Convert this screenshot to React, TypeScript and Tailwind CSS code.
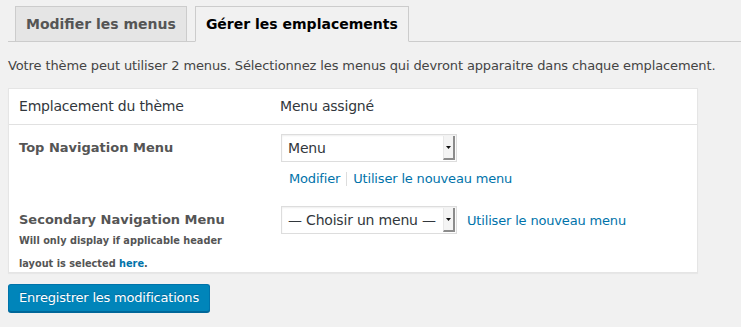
import React from "react";

function Arrow() {
  return (
    <div className="absolute right-[1px] top-[1px] bottom-[1px] w-[12px] bg-[#f4f4f4] border-r-2 border-b-2 border-[#8c8c8c] border-l border-l-[#e8e8e8] flex items-center justify-center">
      <svg width="5" height="3" viewBox="0 0 5 3">
        <path d="M0 0h5L2.5 3z" fill="#111" />
      </svg>
    </div>
  );
}

function Select({ label }: { label: string }) {
  return (
    <div className="relative w-[176px] h-[28px] border border-[#ddd] bg-white shadow-[inset_0_1px_2px_rgba(0,0,0,0.07)] flex items-center pl-[6px] text-[14px] tracking-[-0.2px] text-[#32373c]">
      <span>{label}</span>
      <Arrow />
    </div>
  );
}

export default function App() {
  return (
    <div
      className="w-[741px] h-[327px] bg-[#f1f1f1] overflow-hidden"
      style={{ fontFamily: '"DejaVu Sans", sans-serif' }}
    >
      <div className="ml-2 pt-[6px] pl-[7px] flex gap-[8px] border-b border-[#ccc]">
        <div className="-mb-px border border-[#ccc] bg-[#e5e5e5] px-[10px] py-[5px] leading-[24px] text-[14px] font-bold text-[#555]">
          Modifier les menus
        </div>
        <div className="-mb-px border border-[#ccc] border-b-[#f1f1f1] bg-[#f1f1f1] px-[10px] py-[5px] leading-[24px] text-[14px] font-bold text-black">
          Gérer les emplacements
        </div>
      </div>

      <p className="mt-[14px] ml-2 text-[13px] leading-[19px] tracking-[-0.12px] text-[#444]">
        Votre thème peut utiliser 2 menus. Sélectionnez les menus qui devront apparaitre dans chaque emplacement.
      </p>

      <div className="mt-[13px] ml-2 w-[690px] border border-[#e5e5e5] bg-white shadow-[0_1px_1px_rgba(0,0,0,0.04)]">
        <div className="flex border-b border-[#e1e1e1] py-2 text-[14px] leading-[19px] tracking-[-0.2px] text-[#32373c]">
          <div className="w-[272px] pl-[10px]">Emplacement du thème</div>
          <div className="-ml-px">Menu assigné</div>
        </div>

        <div className="flex pt-[9px] pb-[9px]">
          <div className="w-[272px] pl-[10px] pt-[4px] text-[13px] leading-[19px] font-bold text-[#555]">
            Top Navigation Menu
          </div>
          <div>
            <Select label="Menu" />
            <div className="mt-[7px] ml-[8px] flex items-center text-[13px] leading-[19px] tracking-[-0.17px] text-[#0073aa]">
              <span>Modifier</span>
              <span className="mx-[6px] w-px h-[14px] bg-[#ddd]" />
              <span>Utiliser le nouveau menu</span>
            </div>
          </div>
        </div>

        <div className="flex h-[75px] pt-[9px]">
          <div className="w-[272px] pl-[10px] pt-[4px]">
            <div className="text-[13px] leading-[19px] font-bold text-[#555]">Secondary Navigation Menu</div>
            <div className="w-[215px] text-[9.75px] leading-[23px] font-bold text-[#555]">
              <div>Will only display if applicable header</div>
              <div>
                layout is selected <span className="text-[#0073aa]">here</span>.
              </div>
            </div>
          </div>
          <div className="flex items-start">
            <Select label="— Choisir un menu —" />
            <span className="ml-[10px] mt-[1px] text-[13px] leading-[28px] tracking-[-0.17px] text-[#0073aa]">
              Utiliser le nouveau menu
            </span>
          </div>
        </div>
      </div>

      <div className="mt-[11px] ml-2 inline-flex h-[28px] items-center rounded-[3px] border border-[#0073aa] border-b-[#006799] bg-[#0085ba] px-[10px] text-[13px] tracking-[-0.2px] text-white shadow-[0_1px_0_#006799] [text-shadow:0_-1px_1px_#006799]">
        Enregistrer les modifications
      </div>
    </div>
  );
}
